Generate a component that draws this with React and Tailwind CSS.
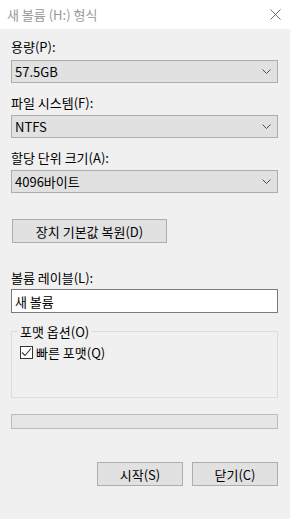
const font = { fontFamily: '"Noto Sans CJK KR", "Noto Sans", sans-serif' };

function Chevron() {
  return (
    <svg width="9" height="5" viewBox="0 0 9 5" className="shrink-0">
      <path d="M0.5 0.5 L4.5 4.5 L8.5 0.5" fill="none" stroke="#4d4d4d" strokeWidth="1" />
    </svg>
  );
}

function Combo({ value, className = '' }) {
  return (
    <div className={`h-[23px] flex items-center justify-between bg-[#e1e1e1] border border-[#adadad] pl-[3px] pr-[6px] ${className}`}>
      <span className="text-[13px] leading-[15px] text-black">{value}</span>
      <Chevron />
    </div>
  );
}

function Label({ children, className = '' }) {
  return <div className={`h-[15px] text-[13px] leading-[15px] text-black ${className}`}>{children}</div>;
}

function Button({ children, className = '' }) {
  return (
    <div className={`h-[24px] flex items-center justify-center bg-[#e1e1e1] border border-[#adadad] text-[13px] leading-[15px] text-black ${className}`}>
      {children}
    </div>
  );
}

export default function App() {
  return (
    <div className="w-[290px] h-[519px] bg-[#f0f0f0] flex flex-col overflow-hidden" style={font}>
      {/* title bar */}
      <div className="h-[29px] bg-white flex items-center justify-between pl-[7px] pr-[9px]">
        <span className="text-[13px] leading-[15px] text-[#999999]">새 볼륨 (H:) 형식</span>
        <svg width="11" height="11" viewBox="0 0 11 11">
          <path d="M0.5 0.5 L10.5 10.5 M10.5 0.5 L0.5 10.5" stroke="#707070" strokeWidth="1" />
        </svg>
      </div>

      <div className="flex flex-col pl-[11px] pr-[12px]">
        <Label className="mt-[10px]">용량(P):</Label>
        <Combo value="57.5GB" className="mt-[6px]" />

        <Label className="mt-[12px]">파일 시스템(F):</Label>
        <Combo value="NTFS" className="mt-[5px]" />

        <Label className="mt-[12px]">할당 단위 크기(A):</Label>
        <Combo value="4096바이트" className="mt-[5px]" />

        <Button className="mt-[26px] ml-[1px] w-[155px]">장치 기본값 복원(D)</Button>

        <Label className="mt-[27px]">볼륨 레이블(L):</Label>
        <div className="mt-[4px] h-[24px] bg-white border border-[#7a7a7a] flex items-center pl-[3px] text-[13px] leading-[15px] text-black">
          새 볼륨
        </div>

        {/* group box */}
        <div className="mt-[18px] h-[67px] border border-[#dcdcdc] flex flex-col">
          <div className="-mt-[8px] ml-[6px] self-start bg-[#f0f0f0] px-[2px] text-[13px] leading-[15px] text-black">
            포맷 옵션(O)
          </div>
          <div className="mt-[6px] ml-[8px] flex items-center gap-[3px]">
            <div className="w-[13px] h-[13px] bg-white border border-[#333333] flex items-center justify-center">
              <svg width="11" height="11" viewBox="0 0 11 11">
                <path d="M1 5.5 L4 8.5 L10 1.5" fill="none" stroke="#333333" strokeWidth="1.1" />
              </svg>
            </div>
            <span className="text-[13px] leading-[15px] text-black">빠른 포맷(Q)</span>
          </div>
        </div>

        {/* progress */}
        <div className="mt-[16px] h-[15px] bg-[#e6e6e6] border border-[#bcbcbc]" />

        <div className="mt-[33px] flex justify-end gap-[9px]">
          <Button className="w-[86px]">시작(S)</Button>
          <Button className="w-[86px]">닫기(C)</Button>
        </div>
      </div>
    </div>
  );
}
